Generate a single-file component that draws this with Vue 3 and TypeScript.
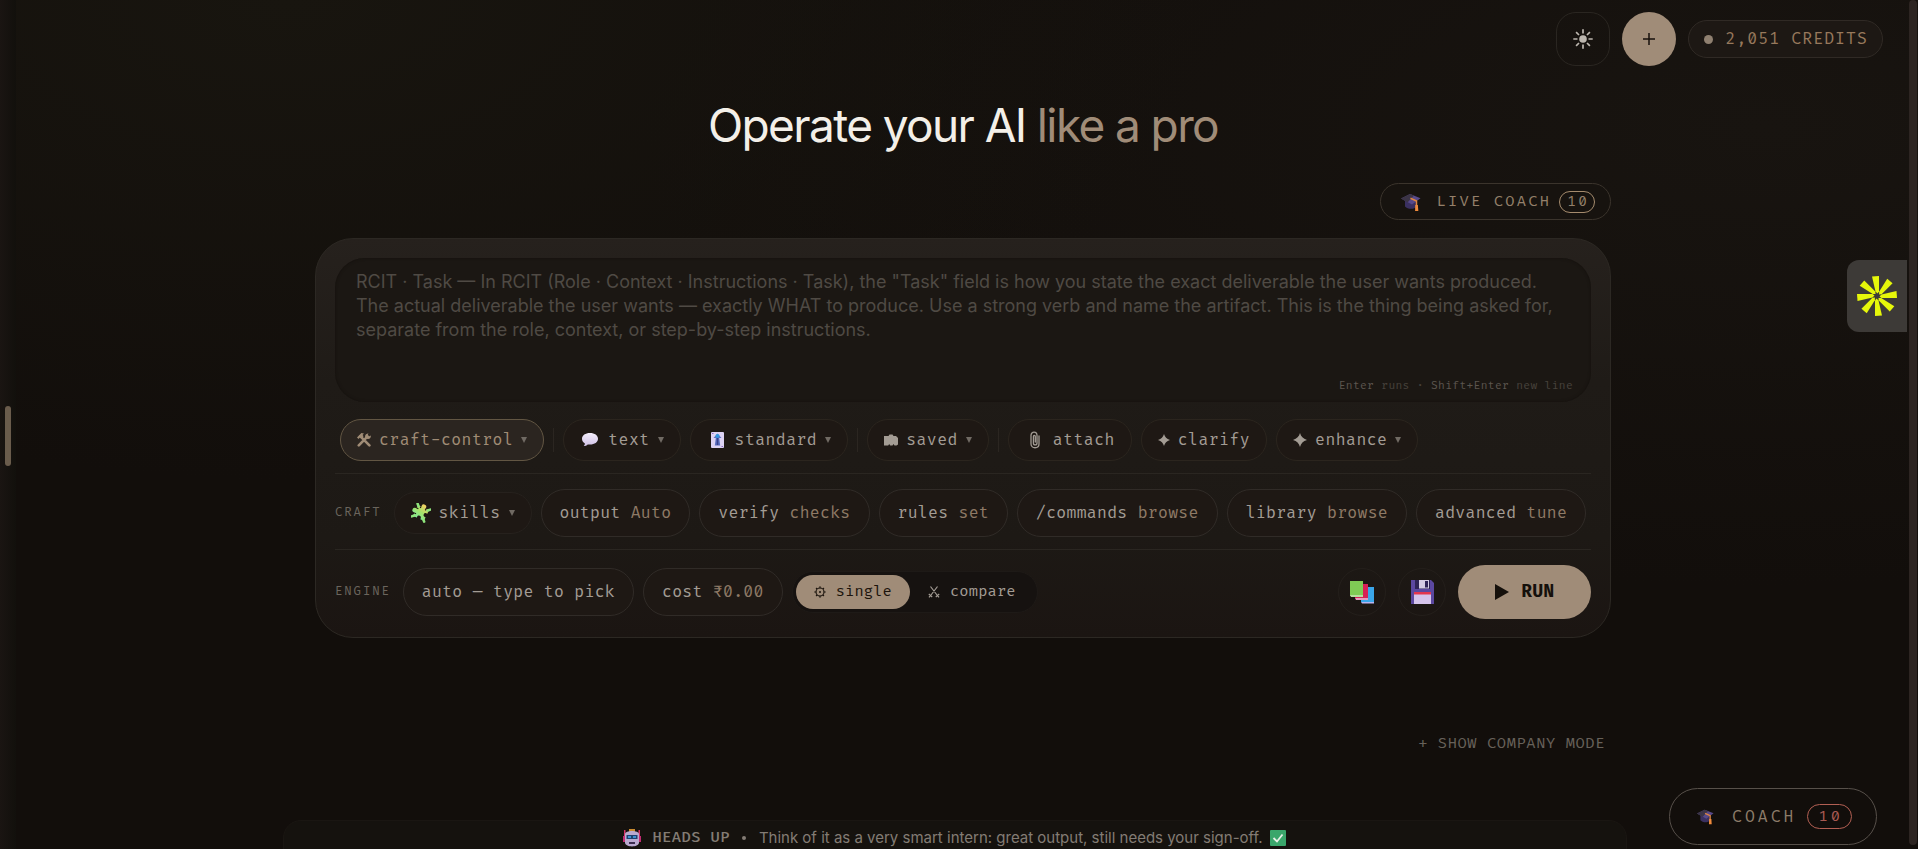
<script setup lang="ts">
import { ref } from 'vue'

interface ToolChip {
  label: string
  icon: string
  size: 'wide' | 'small' | 'tiny'
  menu: boolean
  active?: boolean
  divider?: boolean
}

interface CraftChip {
  label: string
  value: string
}

const prompt = ref('')
const mode = ref<'single' | 'compare'>('single')

const placeholder =
  'RCIT · Task — In RCIT (Role · Context · Instructions · Task), the "Task" field is how you state the exact deliverable the user wants produced. The actual deliverable the user wants — exactly WHAT to produce. Use a strong verb and name the artifact. This is the thing being asked for, separate from the role, context, or step-by-step instructions.'

const tools: ToolChip[] = [
  { label: 'craft-control', icon: 'tools', size: 'small', menu: true, active: true, divider: true },
  { label: 'text', icon: 'bubble', size: 'wide', menu: true },
  { label: 'standard', icon: 'card', size: 'wide', menu: true, divider: true },
  { label: 'saved', icon: 'folder', size: 'small', menu: true, divider: true },
  { label: 'attach', icon: 'clip', size: 'wide', menu: false },
  { label: 'clarify', icon: 'spark', size: 'tiny', menu: false },
  { label: 'enhance', icon: 'spark', size: 'small', menu: true },
]

const craft: CraftChip[] = [
  { label: 'output', value: 'Auto' },
  { label: 'verify', value: 'checks' },
  { label: 'rules', value: 'set' },
  { label: '/commands', value: 'browse' },
  { label: 'library', value: 'browse' },
  { label: 'advanced', value: 'tune' },
]
</script>

<template>
  <div class="page">
    <svg class="defs" aria-hidden="true">
      <defs>
        <linearGradient id="puzzle-fill" gradientUnits="userSpaceOnUse" x1="12" y1="2" x2="8" y2="18">
          <stop offset="0" stop-color="#f3cf62" />
          <stop offset="0.45" stop-color="#a5e36a" />
          <stop offset="1" stop-color="#79eba4" />
        </linearGradient>
        <linearGradient id="bubble-fill" x1="0" y1="0" x2="0" y2="1">
          <stop offset="0" stop-color="#f4eefb" />
          <stop offset="1" stop-color="#cfc0e6" />
        </linearGradient>
      </defs>
      <symbol id="i-tools" viewBox="0 0 14 14">
        <path d="M1.800 12.400 10.600 3.400M3.200 3.200l9.200 9.200" stroke="currentColor" stroke-width="2.600" stroke-linecap="round" />
        <path d="M0 4.600 4.400 0l2.600.6-1.400 1.400 1 1.200-2.400 2.400-1.400-1L1.600 6z" fill="currentColor" />
        <path d="M9 1.200 11.400.2l-.8 2.200 1.200 1L13.800 2.400c.4 2.400-1.200 4-3.400 3.600L8.200 4c-.4-1 .2-2.200.8-2.800z" fill="currentColor" />
      </symbol>
      <symbol id="i-bubble" viewBox="0 0 20 20">
        <path d="M10 3c4.600 0 8 2.400 8 5.800s-3.400 5.800-8 5.800c-.8 0-1.600-.1-2.300-.2-1 1-2.400 1.600-4 1.600.8-.8 1.200-1.600 1.200-2.600C3.100 12.400 2 10.700 2 8.800 2 5.400 5.400 3 10 3z" fill="url(#bubble-fill)" />
      </symbol>
      <symbol id="i-card" viewBox="0 0 20 20">
        <rect x="4" y="2" width="13" height="16" rx="1" fill="#dcd2f3" />
        <path d="M10.500 3.500 14.500 8h-2.300l1 7.500h-5.400l1-7.500H6.500z" fill="#5b6fc0" />
        <circle cx="10.500" cy="6" r="2" fill="#3497de" />
        <path d="M10.500 8v7" stroke="#39408c" stroke-width="1.500" />
        <path d="M5 3.500h1.500M14.500 16.500H16" stroke="#8e6bc4" />
      </symbol>
      <symbol id="i-folder" viewBox="0 0 14 14">
        <path d="M0 3h4.500l1-1.500h3L9.500 3H12l2 2v6.500l-1.500 1h-2L9.500 11l-1 1.500H6.200L5.200 11l-1 1.500H0z" fill="currentColor" />
      </symbol>
      <symbol id="i-clip" viewBox="0 0 20 20">
        <path d="M14 6v8c0 5-8 5-8 0V5.500c0-4.500 6-4.500 6 0V13c0 2.600-3.600 2.600-3.600 0V6.500c0-1.500 1.900-1.500 1.900 0V12" fill="none" stroke="currentColor" stroke-width="1.300" stroke-linecap="round" />
      </symbol>
      <symbol id="i-spark" viewBox="0 0 12 12">
        <path d="M6 0c.9 3.100 2.600 4.900 6 6-3.400 1-5.100 2.900-6 6C5.100 8.900 3.400 7 0 6c3.400-1.100 5.100-2.900 6-6z" fill="currentColor" />
      </symbol>
      <symbol id="i-puzzle" viewBox="0 0 20 20">
        <g transform="rotate(25 10 10)">
          <g fill="url(#puzzle-fill)">
            <rect x="4" y="4" width="12" height="12" rx="1" />
            <circle cx="10" cy="3.200" r="2.400" />
            <circle cx="3.200" cy="10" r="2.400" />
          </g>
          <circle cx="15" cy="10" r="2" fill="#1e1814" />
          <circle cx="10" cy="15" r="2" fill="#1e1814" />
          <path d="M15 8.800h2v2.400h-2zM8.800 15h2.400v2H8.800z" fill="#1e1814" />
          <path d="M5 5 3 3M15 5l2-2M5 15l-2 2M15 15l1.500 1.500" stroke="#8fe57c" stroke-width="2.600" stroke-linecap="round" />
          <path d="M7.200 4v1.800M12.800 4v1.800M4 7.200h1.800M4 12.800h1.800" stroke="#1e1814" stroke-width="1.200" />
        </g>
      </symbol>
      <symbol id="i-cap" viewBox="0 0 20 20">
        <path d="M4 9v5.500c2.500 3 9 3.200 11.500.3V8z" fill="#3a3060" />
        <path d="M0 6.500 9 2l10.500 4.300L11 12.500z" fill="#57498a" />
        <path d="M0 6.500 9 2l4 1.600-6.500 7z" fill="#3b3446" />
        <path d="M9.500 6.300 15.500 9v8" fill="none" stroke="#e0863f" stroke-width="1.500" />
        <path d="M14.300 13h2.600l.4 6h-3.200z" fill="#f08a3c" />
      </symbol>
    </svg>

    <aside class="rail"><button class="rail-handle" type="button" aria-label="Open sidebar"></button></aside>

    <header class="top">
      <button class="theme" type="button" aria-label="Toggle theme">
        <svg viewBox="0 0 20 20" width="20" height="20" aria-hidden="true">
          <circle cx="10" cy="10" r="3.800" fill="currentColor" />
          <path d="M10 .3v4.200M10 15.500v4.200M.3 10h4.200M15.500 10h4.200M3.100 3.100 6 6M14 14l2.900 2.900M3.100 16.900 6 14M14 6l2.900-2.900" stroke="currentColor" stroke-width="1.700" />
        </svg>
      </button>
      <button class="add" type="button" aria-label="New">
        <svg viewBox="0 0 12 12" width="12" height="12" aria-hidden="true"><path d="M6 0v12M0 6h12" stroke="currentColor" stroke-width="1.500" /></svg>
      </button>
      <button class="credits" type="button"><span class="dot"></span>2,051 CREDITS</button>
    </header>

    <main class="main">
      <h1 class="title">Operate your AI <span>like a pro</span></h1>

      <div class="coach-row">
        <button class="live" type="button">
          <svg class="cap" aria-hidden="true"><use href="#i-cap" /></svg>
          <span>LIVE COACH</span>
          <span class="count">10</span>
        </button>
      </div>

      <section class="card">
        <div class="editor">
          <textarea v-model="prompt" aria-label="Task" :placeholder="placeholder"></textarea>
          <p class="hint"><b>Enter</b> runs · <b>Shift+Enter</b> new line</p>
        </div>

        <div class="row tools">
          <template v-for="t in tools" :key="t.label">
            <button class="chip" :class="{ active: t.active }" type="button">
              <svg class="icon" :class="t.size" aria-hidden="true"><use :href="'#i-' + t.icon" /></svg>
              <span>{{ t.label }}</span>
              <i v-if="t.menu" class="caret"></i>
            </button>
            <span v-if="t.divider" class="divider"></span>
          </template>
        </div>

        <div class="row craft">
          <span class="label">CRAFT</span>
          <button class="chip plain" type="button">
            <svg class="icon wide" aria-hidden="true"><use href="#i-puzzle" /></svg>
            <span>skills</span>
            <i class="caret"></i>
          </button>
          <button v-for="c in craft" :key="c.label" class="pill" type="button">
            {{ c.label }} <em>{{ c.value }}</em>
          </button>
        </div>

        <div class="row engine">
          <span class="label">ENGINE</span>
          <button class="pill" type="button">auto — type to pick</button>
          <button class="pill" type="button">cost <em>₹0.00</em></button>
          <div class="segment">
            <button type="button" :class="{ on: mode === 'single' }" @click="mode = 'single'">
              <svg viewBox="0 0 12 12" width="12" height="12" aria-hidden="true">
                <circle cx="6" cy="6" r="4" fill="none" stroke="currentColor" stroke-width="1.100" />
                <circle cx="6" cy="6" r="1" fill="currentColor" />
                <path d="M6 .3v2M6 9.700v2M.3 6h2M9.700 6h2M2 2l1.200 1.200M8.800 8.800 10 10M2 10l1.200-1.200M8.800 3.200 10 2" stroke="currentColor" stroke-width="1.100" />
              </svg>
              single
            </button>
            <button type="button" :class="{ on: mode === 'compare' }" @click="mode = 'compare'">
              <svg viewBox="0 0 12 12" width="12" height="12" aria-hidden="true">
                <path d="M2.500.5 9 9M9.500.5 3 9M.8 8l3.400 3M11.200 8l-3.400 3M2.500 9.500 1 11.300M9.500 9.500l1.500 1.800" fill="none" stroke="currentColor" stroke-width="1.200" />
              </svg>
              compare
            </button>
          </div>
          <div class="actions">
            <button class="round" type="button" aria-label="Library">
              <svg viewBox="0 0 24 24" width="24" height="24" aria-hidden="true">
                <path d="M11 7h13v15H11z" fill="#3aa6ea" />
                <path d="M11 22h13v1.500H12z" fill="#b9b4ef" />
                <path d="M5 4h13v14H5z" fill="#d81f55" />
                <path d="M5 18h13v2H6z" fill="#e49bc0" />
                <path d="M0 1h13v15H0z" fill="#7fcb55" />
                <path d="M0 15h13v2H1z" fill="#b8dca0" />
              </svg>
            </button>
            <button class="round" type="button" aria-label="Save">
              <svg viewBox="0 0 24 24" width="24" height="24" aria-hidden="true">
                <path d="M1 0h20l3 3v21H1z" fill="#5b48a0" />
                <path d="M5 0h15v9H5z" fill="#2e2457" />
                <path d="M9 0h10v8.500H9z" fill="#d3cbe4" />
                <path d="M15 1h3v6.500h-3z" fill="#2e2457" />
                <path d="M4 12h17v12H4z" fill="#d5c4ec" />
                <path d="M4 12h17v2.500H4z" fill="#e2364f" />
              </svg>
            </button>
            <button class="run" type="button">
              <svg viewBox="0 0 14 16" width="14" height="16" aria-hidden="true"><path d="M0 0v16l14-8z" fill="currentColor" /></svg>
              RUN
            </button>
          </div>
        </div>
      </section>

      <div class="mode-row"><button class="mode" type="button">+ SHOW COMPANY MODE</button></div>
    </main>

    <footer class="notice">
      <svg viewBox="0 0 18 18" width="18" height="18" aria-hidden="true">
        <path d="M1 1h1.500v6H1zM15.500 1H17v6h-1.500z" fill="#d83468" />
        <path d="M0 7h3v6H0zM15 7h3v6h-3z" fill="#c22c72" />
        <path d="M6 0h6v3H6z" fill="#c98b2f" />
        <path d="M2 5c0-4 14-4 14 0v9c-1 4.500-13 4.500-14 0z" fill="#b9a9cf" />
        <path d="M3.500 6h11v4h-11z" fill="#20406f" />
        <path d="M5 7h3v2H5zM10 7h3v2h-3z" fill="#3f8fcf" />
        <path d="M6 13h6v2H6z" fill="#3b2c50" />
      </svg>
      <strong>HEADS UP</strong>
      <span class="sep"></span>
      <span>Think of it as a very smart intern: great output, still needs your sign-off.</span>
      <svg class="check" viewBox="0 0 16 16" width="16" height="16" aria-hidden="true">
        <rect width="16" height="16" rx="1" fill="#3aa66b" />
        <path d="M3.500 8 7 11.500l5.500-7" fill="none" stroke="#e6efe6" stroke-width="1.800" />
      </svg>
    </footer>

    <button class="coach" type="button">
      <svg class="cap small" aria-hidden="true"><use href="#i-cap" /></svg>
      <span>COACH</span>
      <span class="count">10</span>
    </button>

    <button class="widget" type="button" aria-label="Open assistant">
      <svg viewBox="-20 -20 40 40" width="40" height="40" aria-hidden="true">
        <g fill="#e6f70a">
          <path v-for="n in 8" :key="n" d="M-5-19.500 2-20 2-4.500.5-2.500-1.500-4.500z" :transform="`rotate(${n * 45})`" />
        </g>
      </svg>
    </button>

    <div class="scroll" aria-hidden="true"></div>
  </div>
</template>

<style>
html,
body {
  background: #120e0b;
}
</style>

<style scoped>
.page {
  --mono: 'Fira Code', 'DejaVu Sans Mono', monospace;
  --tan: #a08c78;
  position: relative;
  display: flex;
  flex-direction: column;
  height: 100vh;
  box-sizing: border-box;
  overflow: hidden;
  padding-right: 9px;
  color: #a39c94;
  font-family: Inter, 'Liberation Sans', sans-serif;
  background: radial-gradient(ellipse at 15% 0, #18150f 0, transparent 40%),
    radial-gradient(ellipse at 92% 15%, #181410 0, transparent 45%), #120e0b;
}
.defs {
  position: absolute;
  width: 0;
  height: 0;
}
button {
  display: inline-flex;
  align-items: center;
  justify-content: center;
  box-sizing: border-box;
  margin: 0;
  padding: 0;
  border: 0;
  background: none;
  color: inherit;
  font: 16px/20px var(--mono);
  letter-spacing: 0.03em;
  white-space: nowrap;
  cursor: pointer;
}
svg {
  flex: none;
}

.rail {
  position: absolute;
  inset: 0 auto 0 0;
  display: flex;
  align-items: center;
  width: 16px;
  padding: 23px 0 0 5px;
  box-sizing: border-box;
  background: linear-gradient(90deg, #1a1512, #12100c);
}
.rail-handle {
  width: 6px;
  height: 60px;
  border-radius: 3px;
  background: #6a5c4c;
}

.top {
  display: flex;
  align-items: center;
  justify-content: flex-end;
  gap: 12px;
  padding: 12px 26px 0 0;
}
.theme,
.add {
  width: 54px;
  height: 54px;
}
.theme {
  border: 1px solid #2a2621;
  border-radius: 20px;
  color: #bdb7af;
}
.add {
  border-radius: 50%;
  background: var(--tan);
  color: #17110c;
}
.credits {
  gap: 12px;
  height: 38px;
  padding: 0 14px 0 15px;
  border: 1px solid #302a25;
  border-radius: 19px;
  background: #1d1814;
  color: #97795c;
  letter-spacing: 0.07em;
}
.dot {
  width: 9px;
  height: 9px;
  border-radius: 50%;
  background: #8f8070;
}

.main {
  width: calc(100% - 48px);
  max-width: 1296px;
  margin: 0 auto;
  padding-left: 17px;
}
.title {
  margin: 31px 0 30px;
  color: #f3efe8;
  font-size: 46px;
  font-weight: 400;
  line-height: 56px;
  letter-spacing: -0.035em;
  text-align: center;
}
.title span {
  color: var(--tan);
}
.coach-row,
.mode-row {
  display: flex;
  justify-content: flex-end;
}
.live {
  height: 37px;
  padding: 0 15px 0 20px;
  border: 1px solid #3b342c;
  border-radius: 19px;
  background: #17130f;
  color: #94806a;
  font-size: 15px;
  letter-spacing: 0.15em;
}
.cap {
  width: 20px;
  height: 20px;
  margin-right: 15px;
}
.cap.small {
  width: 17px;
  height: 17px;
  margin-right: 18px;
}
.count {
  padding: 0 5px 0 7px;
  border: 1px solid #a58b6d;
  border-radius: 12px;
  font-size: 14px;
}
.live .count {
  margin-left: 8px;
}

.card {
  margin-top: 18px;
  padding: 19px;
  padding-bottom: 18px;
  border: 1px solid #2c2823;
  border-radius: 38px;
  background: linear-gradient(180deg, #26211d 0, #1f1b17 36%, #1d1915 75%, #1b1512 100%);
}
.editor {
  position: relative;
  border-radius: 30px;
  background: #1b1713;
  box-shadow: inset 0 0 3px #14100d;
}
textarea {
  display: block;
  box-sizing: border-box;
  width: 100%;
  height: 144px;
  padding: 12px 21px;
  border: 0;
  outline: 0;
  resize: none;
  overflow: hidden;
  background: none;
  color: #d6d0c8;
  font: 18px/24px Inter, 'Liberation Sans', sans-serif;
}
textarea::placeholder {
  color: #4f4a44;
  opacity: 1;
}
.hint {
  position: absolute;
  right: 18px;
  bottom: 8px;
  margin: 0;
  color: #47423c;
  font: 11px/16px var(--mono);
  letter-spacing: 0.03em;
}
.hint b {
  color: #5b554e;
  font-weight: 400;
}

.row {
  display: flex;
  align-items: center;
  gap: 9px;
}
.tools {
  padding: 17px 5px 12px;
}
.craft {
  padding: 15px 0 12px;
  border-top: 1px solid #2a2621;
}
.engine {
  padding-top: 15px;
  border-top: 1px solid #2a2621;
}
.chip {
  height: 42px;
  padding: 0 16px;
  border: 1px solid #2b251e;
  border-radius: 21px;
  background: #1e1814;
}
.chip.plain {
  border-color: #26211d;
}
.chip.active {
  border-color: #625643;
  background: #2b2520;
  color: #a08c76;
}
.icon {
  margin-right: 8px;
}
.icon.wide {
  width: 20px;
  height: 20px;
}
.icon.small {
  width: 14px;
  height: 14px;
}
.icon.tiny {
  width: 12px;
  height: 14px;
}
.caret {
  margin-left: 8px;
  border: solid transparent;
  border-width: 6px 3px 0;
  border-top-color: #706a63;
}
.divider {
  width: 1px;
  height: 24px;
  background: #2b2621;
}
.label {
  margin-right: 3px;
  color: #6b655d;
  font: 12px/16px var(--mono);
  letter-spacing: 0.16em;
}
.pill {
  height: 48px;
  padding: 0 18px;
  border: 1px solid #302b27;
  border-radius: 24px;
  background: #1e1814;
  letter-spacing: 0.02em;
  white-space: pre;
}
.pill em {
  color: #8e7a66;
  font-style: normal;
}
.segment {
  display: flex;
  padding: 3px;
  border: 1px solid #1e1a17;
  border-radius: 21px;
  background: #161210;
}
.segment button {
  gap: 10px;
  height: 34px;
  padding: 0 18px;
  border-radius: 17px;
  font-size: 15px;
  letter-spacing: 0.01em;
}
.segment .on {
  background: var(--tan);
  color: #1c140d;
}
.actions {
  display: flex;
  align-items: center;
  gap: 12px;
  margin-left: auto;
}
.round {
  width: 48px;
  height: 48px;
  border: 1px solid #241f1b;
  border-radius: 50%;
}
.run {
  gap: 13px;
  width: 133px;
  height: 54px;
  border-radius: 27px;
  background: var(--tan);
  color: #15100b;
  font-size: 17px;
  font-weight: 700;
  letter-spacing: 0.03em;
}

.mode-row {
  margin-top: 94px;
}
.mode {
  height: 24px;
  padding: 0 6px;
  color: #67615a;
  font-size: 15px;
  letter-spacing: 0.04em;
}

.notice {
  display: flex;
  align-items: center;
  justify-content: center;
  box-sizing: border-box;
  width: calc(100% - 48px);
  max-width: 1344px;
  min-height: 60px;
  margin: 64px auto 0;
  padding-bottom: 24px;
  border: 1px solid #1a1612;
  border-radius: 18px;
  background: #15120e;
  color: #837c74;
  font-size: 15px;
  line-height: 20px;
}
.notice strong {
  margin: 0 12px 0 11px;
  font: 500 15px/20px var(--mono);
  letter-spacing: 0.03em;
}
.sep {
  width: 4px;
  height: 4px;
  margin-right: 13px;
  border-radius: 50%;
  background: #837c74;
}
.check {
  margin-left: 7px;
}

.coach {
  position: absolute;
  right: 41px;
  bottom: 4px;
  height: 57px;
  padding: 0 24px 0 27px;
  border: 1px solid #57504a;
  border-radius: 29px;
  background: #120e0b;
  color: #8d7c69;
  letter-spacing: 0.19em;
}
.coach .count {
  margin-left: 11px;
  padding: 2px 8px 1px 10px;
  border-color: #b25f53;
  border-radius: 13px;
  color: #a85a52;
  font-size: 15px;
}
.widget {
  position: absolute;
  top: 260px;
  right: 11px;
  width: 60px;
  height: 72px;
  border-radius: 12px 0 0 12px;
  background: #3d3a37;
}
.scroll {
  position: absolute;
  inset: 0 1px 4px auto;
  width: 8px;
  border-radius: 4px;
  background: #2d2522;
}
</style>
